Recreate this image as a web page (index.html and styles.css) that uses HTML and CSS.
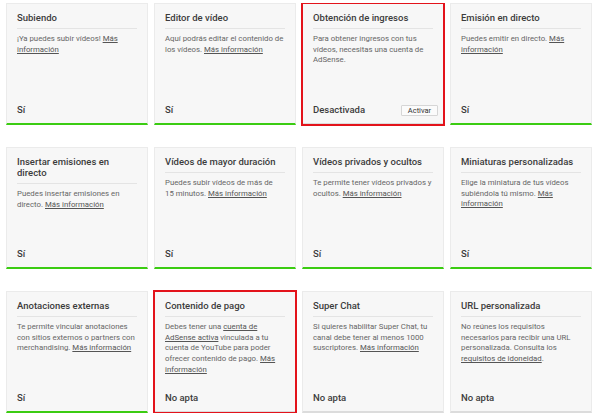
FILE: index.html
```html
<!DOCTYPE html>
<html>
<head>
  <title>Estado y funciones</title>
  <meta charset="UTF-8"/>
  <link rel="stylesheet" href="styles.css">
</head>
<body>

  <div class="features">

    <div class="card ok">
      <div class="card-title">Subiendo</div>
      <p class="card-text">¡Ya puedes subir vídeos! <a href="#">Más información</a></p>
      <div class="card-status">Sí</div>
    </div>

    <div class="card ok">
      <div class="card-title">Editor de vídeo</div>
      <p class="card-text">Aquí podrás editar el contenido de los vídeos. <a href="#">Más información</a></p>
      <div class="card-status">Sí</div>
    </div>

    <div class="card marked">
      <div class="card-title">Obtención de ingresos</div>
      <p class="card-text">Para obtener ingresos con tus vídeos, necesitas una cuenta de AdSense.</p>
      <div class="card-status">
        Desactivada
        <button class="activate-button">Activar</button>
      </div>
    </div>

    <div class="card ok">
      <div class="card-title">Emisión en directo</div>
      <p class="card-text">Puedes emitir en directo. <a href="#">Más información</a></p>
      <div class="card-status">Sí</div>
    </div>

    <div class="card ok">
      <div class="card-title">Insertar emisiones en directo</div>
      <p class="card-text">Puedes insertar emisiones en directo. <a href="#">Más información</a></p>
      <div class="card-status">Sí</div>
    </div>

    <div class="card ok">
      <div class="card-title">Vídeos de mayor duración</div>
      <p class="card-text">Puedes subir vídeos de más de 15&nbsp;minutos. <a href="#">Más información</a></p>
      <div class="card-status">Sí</div>
    </div>

    <div class="card ok">
      <div class="card-title">Vídeos privados y ocultos</div>
      <p class="card-text">Te permite tener vídeos privados y ocultos. <a href="#">Más información</a></p>
      <div class="card-status">Sí</div>
    </div>

    <div class="card ok">
      <div class="card-title">Miniaturas personalizadas</div>
      <p class="card-text">Elige la miniatura de tus vídeos subiéndola tú mismo. <a href="#">Más información</a></p>
      <div class="card-status">Sí</div>
    </div>

    <div class="card ok">
      <div class="card-title">Anotaciones externas</div>
      <p class="card-text">Te permite vincular anotaciones con sitios externos o partners con merchandising. <a href="#">Más información</a></p>
      <div class="card-status">Sí</div>
    </div>

    <div class="card marked">
      <div class="card-title">Contenido de pago</div>
      <p class="card-text">Debes tener una <a href="#">cuenta de AdSense activa</a> vinculada a tu cuenta de YouTube para poder ofrecer contenido de pago. <a href="#">Más información</a></p>
      <div class="card-status">No apta</div>
    </div>

    <div class="card">
      <div class="card-title">Super Chat</div>
      <p class="card-text">Si quieres habilitar Super Chat, tu canal debe tener al menos 1000 suscriptores. <a href="#">Más información</a></p>
      <div class="card-status">No apta</div>
    </div>

    <div class="card">
      <div class="card-title">URL personalizada</div>
      <p class="card-text">No reúnes los requisitos necesarios para recibir una URL personalizada. Consulta los <a href="#">requisitos de idoneidad</a>.</p>
      <div class="card-status">No apta</div>
    </div>

  </div>

</body>
</html>
```

FILE: styles.css
```css
body {
  margin: 3px 0 0 6px;
  background-color: white;
  font-family: Roboto, "Liberation Sans", sans-serif;
}

.features {
  display: grid;
  grid-template-columns: repeat(4, 142px);
  grid-auto-rows: 122px;
  column-gap: 6px;
  row-gap: 22px;
}

.card {
  display: flex;
  flex-direction: column;
  box-sizing: border-box;
  padding: 8px 10px 0 10px;
  background-color: #f7f7f7;
  border: 1px solid #ebebeb;
  border-bottom: 2px solid #dcdcdc;
}

.card.ok {
  border-bottom-color: #3bcc12;
}

.card.marked {
  outline: 2px solid #e3131b;
  outline-offset: -1px;
}

.card-title {
  padding-bottom: 5px;
  border-bottom: 1px solid #e4e4e4;
  font-size: 9.5px;
  font-weight: 500;
  line-height: 11px;
  color: #3c3c3c;
}

.card-text {
  margin: 5px 0 0 0;
  font-size: 7.8px;
  line-height: 10.7px;
  color: #666;
}

.card-text a {
  color: #555;
  text-decoration: underline;
}

.card-status {
  display: flex;
  justify-content: space-between;
  align-items: center;
  margin-top: auto;
  padding-bottom: 7px;
  font-size: 9.5px;
  font-weight: 500;
  line-height: 12px;
  color: #3c3c3c;
}

.activate-button {
  margin-right: -5px;
  width: 37px;
  height: 11px;
  padding: 0;
  font-family: Roboto, "Liberation Sans", sans-serif;
  font-size: 7.5px;
  line-height: 9px;
  color: #333;
  background-color: #fbfbfb;
  border: 1px solid #d6d6d6;
  border-radius: 1px;
}
```
